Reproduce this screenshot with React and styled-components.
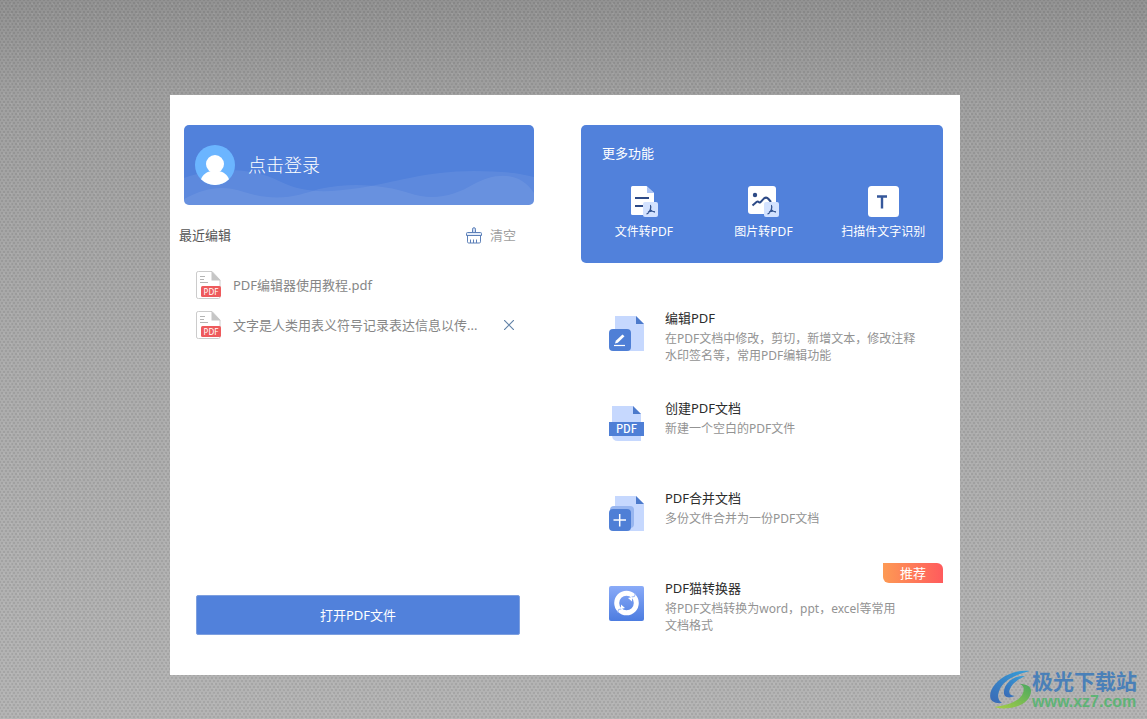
import React, { useState } from "react";
import styled, { createGlobalStyle } from "styled-components";

const blue = "#5181db";
const sans = '"Noto Sans", "Noto Sans CJK SC", sans-serif';

const GlobalStyle = createGlobalStyle`
  *, *::before, *::after { box-sizing: border-box; }
  body {
    margin: 0;
    font-family: ${sans};
    font-size: 13px;
    line-height: 18px;
    color: #333;
  }
  button { font: inherit; color: inherit; background: none; border: 0; padding: 0; cursor: pointer; }
  h1, h2, h3, p, ul { margin: 0; padding: 0; font: inherit; list-style: none; }
`;

const Desktop = styled.div`
  position: relative;
  min-height: 100vh;
  display: flex;
  flex-direction: column;
  padding: 95px 187px 44px 170px;
  background:
    radial-gradient(circle, rgba(0, 0, 0, .08) 0 1px, transparent 1px) 0 0 / 4px 6px,
    radial-gradient(circle, rgba(0, 0, 0, .08) 0 1px, transparent 1px) 2px 3px / 4px 6px,
    radial-gradient(circle, rgba(255, 255, 255, .07) 0 1px, transparent 1px) 1px 1px / 7px 5px,
    linear-gradient(#929292, #a0a0a0 14%, #ababab 50%, #b4b4b4);
`;

const Panel = styled.main`
  flex: 1;
  display: grid;
  grid-template-columns: 350fr 362fr;
  column-gap: 47px;
  padding: 30px 17px 40px 14px;
  background: #fff;
`;

const Column = styled.section`
  display: flex;
  flex-direction: column;
  min-width: 0;
`;

const LoginCard = styled.button`
  position: relative;
  display: flex;
  align-items: center;
  gap: 13px;
  height: 80px;
  padding: 0 11px;
  border-radius: 5px;
  overflow: hidden;
  background: ${blue};
  color: #fff;
  font-size: 18px;
  font-weight: 300;
  text-align: left;
`;

const Waves = styled.svg`
  position: absolute;
  inset: 0;
  width: 100%;
  height: 100%;
`;

const Avatar = styled.svg`
  position: relative;
  width: 40px;
  height: 40px;
`;

const LoginText = styled.span`
  position: relative;
`;

const RecentHeader = styled.div`
  display: flex;
  align-items: center;
  justify-content: space-between;
  height: 20px;
  margin: 20px 18px 0 -5px;
  color: #555;
`;

const ClearButton = styled.button`
  display: flex;
  align-items: center;
  gap: 8px;
  color: #a0a0a0;
`;

const FileList = styled.ul`
  flex: 1;
  margin: 20px 18px 0 12px;
`;

const FileRow = styled.li`
  display: flex;
  align-items: center;
  height: 40px;
  color: #868686;
`;

const FileName = styled.span`
  flex: 1;
  margin-left: 11px;
`;

const CloseButton = styled.button`
  display: flex;
  width: 14px;
  height: 14px;
  align-items: center;
  justify-content: center;
`;

const OpenButton = styled.button`
  height: 40px;
  margin: 0 14px 0 12px;
  border: 1px solid #7d9fdf;
  border-radius: 2px;
  background: ${blue};
  color: #fff;
`;

const ToolsCard = styled.section`
  height: 138px;
  padding: 19px 0 0;
  border-radius: 5px;
  background: ${blue};
  color: #fff;
`;

const ToolsTitle = styled.h2`
  padding-left: 21px;
`;

const ToolRow = styled.div`
  display: grid;
  grid-template-columns: repeat(3, 120fr);
  margin: 23px 0 0 3px;
`;

const Tool = styled.button`
  display: flex;
  flex-direction: column;
  align-items: center;
  gap: 6px;
  font-size: 12px;
`;

const FeatureList = styled.ul`
  display: flex;
  flex-direction: column;
  margin-top: 45px;
`;

const Feature = styled.li`
  position: relative;
  height: 90px;
  padding-left: 28px;
  &:last-child { height: auto; }
`;

const FeatureButton = styled.button`
  display: flex;
  align-items: flex-start;
  gap: 21px;
  text-align: left;
  svg { flex: none; margin-top: 8px; }
`;

const FeatureTitle = styled.h3`
  line-height: 20px;
  color: #2c2c2c;
`;

const FeatureText = styled.p`
  margin-top: 2px;
  font-size: 12px;
  line-height: 17px;
  color: #939393;
`;

const Ribbon = styled.span`
  position: absolute;
  top: -15px;
  right: 0;
  width: 60px;
  border-radius: 0 6px 0 6px;
  background: linear-gradient(90deg, #fd9a54, #ff5b5d);
  color: #fff;
  line-height: 20px;
  text-align: center;
`;

const Watermark = styled.aside`
  position: absolute;
  right: 10px;
  bottom: 7px;
  display: flex;
  align-items: center;
`;

const WatermarkName = styled.div`
  font-size: 21px;
  line-height: 22px;
  font-weight: 700;
  color: #4a80b8;
`;

const WatermarkSite = styled.div`
  font-family: "Liberation Sans", sans-serif;
  font-size: 16px;
  line-height: 20px;
  font-weight: 700;
  color: #5fb376;
`;

function Broom() {
  return (
    <svg width="16" height="17" viewBox="0 0 16 17" fill="none" stroke="#5d80b8" aria-hidden="true">
      <path d="M6.500 5.500V2.200a1.500 1.500 0 0 1 3 0V5.500" fill="#cfdcf3" />
      <path d="M1.500 5.500h13a1 1 0 0 1 1 1v2H.5v-2a1 1 0 0 1 1-1z" fill="#e3ecfa" />
      <path d="M1.500 8.500v6.300q0 1.200 1.200 1.200h10.600q1.200 0 1.200-1.200V8.500M4.500 16v-3.500M7.500 16v-3.500M10.500 16v-3.500" />
    </svg>
  );
}

function PdfFile() {
  return (
    <svg width="26" height="30" viewBox="0 0 26 30" aria-hidden="true">
      <path d="M2.500 1.500H16L24 10v17q0 1.500-1.500 1.500h-20Q.5 28.500.5 27V3q0-1.500 2-1.500z" fill="#fff" stroke="#ccc" />
      <path d="M15.500 1L24.500 10.500H15.500z" fill="#c6c6c6" />
      <path d="M4 6.500h5M4 9.500h4M4 12.500h8" stroke="#b5b5b5" />
      <rect x="5" y="16" width="20" height="11" rx="1.500" fill="#ee5a5c" />
      <text x="15" y="24.500" fontSize="8" textAnchor="middle" fill="#fff" fontFamily="Noto Sans, sans-serif">PDF</text>
    </svg>
  );
}

function PdfMark() {
  return (
    <>
      <rect x="13" y="17" width="15" height="15" rx="2" fill="#d3e2ff" />
      <path d="M20 20.500c1.200 0 .8 3.500-.3 5.300-1 1.700-2.200 3-3.200 3M20.200 24.500c.8 1.300 2.500 2.200 4.800 2.500M18 26.800l4.500-1" fill="none" stroke="#33538f" strokeWidth="1.300" />
    </>
  );
}

function FileToPdf() {
  return (
    <svg width="28" height="32" viewBox="0 0 28 32" aria-hidden="true">
      <path d="M2.500 1H16.500L24 8v22H2.500Q1 30 1 28.500v-26Q1 1 2.500 1z" fill="#fff" />
      <path d="M17 1.500V8h6.800z" fill="#a9c3f5" />
      <path d="M5 13h14M5 21h9" stroke="#2d4a86" strokeWidth="2" />
      <PdfMark />
    </svg>
  );
}

function ImageToPdf() {
  return (
    <svg width="31" height="32" viewBox="0 0 31 32" aria-hidden="true">
      <rect y="1" width="28" height="28" rx="3" fill="#fff" />
      <circle cx="7" cy="10" r="2.200" fill="#2d4a86" />
      <path d="M4.500 20.500L8.500 17q1.200-1 2.500.3 1 .8 2-.6l3-3.300q2.500-1.800 4.500.6l2.500 3" fill="none" stroke="#2d4a86" strokeWidth="2" />
      <g transform="translate(3 0)"><PdfMark /></g>
    </svg>
  );
}

function ScanText() {
  return (
    <svg width="31" height="32" viewBox="0 0 31 32" aria-hidden="true">
      <rect y="1" width="31" height="31" rx="3.500" fill="#fff" />
      <path d="M9 11.500h10M14 11.500V23.500" fill="none" stroke="#36589b" strokeWidth="2.400" />
    </svg>
  );
}

function EditIcon() {
  return (
    <svg width="35" height="35" viewBox="0 0 35 35" aria-hidden="true">
      <path d="M6 0h21l8 8v27H6z" fill="#c6d8fe" />
      <path d="M27 0l8 8h-8z" fill="#4c7acb" />
      <rect y="13" width="22" height="22" rx="4" fill="#4f7fd6" />
      <path d="M5 29.500h11" stroke="#fff" strokeWidth="1.200" />
      <path d="M6 27.500l.8-2.700 6.700-6.300 2 1.800-6.700 6.400z" fill="#fff" />
    </svg>
  );
}

function CreateIcon() {
  return (
    <svg width="35" height="35" viewBox="0 0 35 35" aria-hidden="true">
      <path d="M3 0h21l8 8v27H9q-6 0-6-6z" fill="#c6d8fe" />
      <path d="M24 0l8 8h-8z" fill="#4c7acb" />
      <rect y="16" width="35" height="14" fill="#4f7fd6" />
      <text x="17.500" y="27" fontSize="11" fontWeight="500" textAnchor="middle" fill="#fff" fontFamily="Noto Sans CJK SC, sans-serif">PDF</text>
    </svg>
  );
}

function MergeIcon() {
  return (
    <svg width="35" height="35" viewBox="0 0 35 35" aria-hidden="true">
      <path d="M6 0h21l8 8v27H6z" fill="#c6d8fe" />
      <path d="M27 0l8 8h-8z" fill="#4c7acb" />
      <rect x="1" y="10" width="24" height="22" rx="4" fill="#98b6f0" />
      <rect y="13" width="22" height="22" rx="4" fill="#4f7fd6" />
      <path d="M4.500 24h12.500M10.700 18v12.500" stroke="#fff" strokeWidth="1.500" />
    </svg>
  );
}

function ConverterIcon() {
  return (
    <svg width="35" height="35" viewBox="0 0 35 35" aria-hidden="true">
      <defs>
        <linearGradient id="conv" x2="0" y2="1">
          <stop stopColor="#8aabf8" />
          <stop offset="1" stopColor="#4c7ce0" />
        </linearGradient>
      </defs>
      <rect width="35" height="35" rx="2" fill="url(#conv)" />
      <circle cx="17.500" cy="17" r="9.800" fill="none" stroke="#fff" strokeWidth="5" />
      <path d="M22.500 11l3-.5.800-3M12.500 23l-3 .5-.8 3" fill="none" stroke="#9bb7f5" />
      <path d="M23 15.500v-4.500l-4 1zM12 18.500v4.500l4-1z" fill="#fff" />
    </svg>
  );
}

function Logo() {
  return (
    <svg width="42" height="42" viewBox="0 0 42 42" aria-hidden="true">
      <defs>
        <linearGradient id="swirlBlue" x1="1" x2="0" y2="1">
          <stop stopColor="#35a0da" />
          <stop offset="1" stopColor="#3a69b5" />
        </linearGradient>
        <linearGradient id="swirlGreen" x1="1" x2="0" y2="1">
          <stop stopColor="#4aa860" />
          <stop offset="1" stopColor="#a9cf45" />
        </linearGradient>
      </defs>
      <path d="M40 1C24-1 6 8 1 21c-3 9 2 13 11 12C7 30 7 24 11 17 16 9 27 4 40 1z" fill="url(#swirlBlue)" />
      <path d="M35 6c-11-1-20 7-21 15-1 6 4 8 11 5-5 0-7-3-5-7 2-6 9-10 15-13z" fill="url(#swirlBlue)" />
      <path d="M30 14c6 0 11 2 11 7 0 9-10 16-22 17-6 1-11 0-15-1 11-1 24-5 28-12 3-5 2-9-2-11z" fill="url(#swirlGreen)" />
    </svg>
  );
}

const features = [
  { title: "编辑PDF", lines: ["在PDF文档中修改，剪切，新增文本，修改注释", "水印签名等，常用PDF编辑功能"], Icon: EditIcon },
  { title: "创建PDF文档", lines: ["新建一个空白的PDF文件"], Icon: CreateIcon },
  { title: "PDF合并文档", lines: ["多份文件合并为一份PDF文档"], Icon: MergeIcon },
  { title: "PDF猫转换器", lines: ["将PDF文档转换为word，ppt，excel等常用", "文档格式"], Icon: ConverterIcon, badge: "推荐" },
];

const tools = [
  { label: "文件转PDF", Icon: FileToPdf },
  { label: "图片转PDF", Icon: ImageToPdf },
  { label: "扫描件文字识别", Icon: ScanText },
];

const recentFiles = [
  { name: "PDF编辑器使用教程.pdf" },
  { name: "文字是人类用表义符号记录表达信息以传...", removable: true },
];

export default function App() {
  const [files, setFiles] = useState(recentFiles);
  return (
    <>
      <GlobalStyle />
      <Desktop>
        <Panel>
          <Column>
            <LoginCard type="button">
              <Waves viewBox="0 0 350 80" preserveAspectRatio="none" aria-hidden="true">
                <g fill="#fff" fillOpacity=".07">
                  <path d="M0 53C35 40 70 44 95 56s45 12 80 7 65-17 115-17q40 0 60 6v28H0z" />
                  <path d="M0 74C22 62 40 60 60 67c35 11 55 3 75-3 35-8 70-3 90 4 24 8 45 3 65-9 20-11 45-14 60 9v12H0z" />
                </g>
              </Waves>
              <Avatar viewBox="0 0 40 40" aria-hidden="true">
                <circle cx="20" cy="20" r="20" fill="#6bb5ff" />
                <circle cx="20" cy="19" r="9" fill="#fff" />
                <path d="M6 34.300C8 29.500 11.500 27 16 26h8c4.500 1 8 3.500 10 8.300a20 20 0 0 1-28 0z" fill="#fff" />
              </Avatar>
              <LoginText>点击登录</LoginText>
            </LoginCard>
            <RecentHeader>
              <h2>最近编辑</h2>
              <ClearButton type="button" onClick={() => setFiles([])}>
                <Broom />
                清空
              </ClearButton>
            </RecentHeader>
            <FileList>
              {files.map((file) => (
                <FileRow key={file.name}>
                  <PdfFile />
                  <FileName>{file.name}</FileName>
                  {file.removable && (
                    <CloseButton
                      type="button"
                      aria-label="删除"
                      onClick={() => setFiles(files.filter((f) => f !== file))}
                    >
                      <svg width="10" height="10" viewBox="0 0 10 10" stroke="#6283a8" strokeWidth="1.200" aria-hidden="true">
                        <path d="M0 0l10 10M10 0L0 10" />
                      </svg>
                    </CloseButton>
                  )}
                </FileRow>
              ))}
            </FileList>
            <OpenButton type="button">打开PDF文件</OpenButton>
          </Column>
          <Column>
            <ToolsCard>
              <ToolsTitle>更多功能</ToolsTitle>
              <ToolRow>
                {tools.map(({ label, Icon }) => (
                  <Tool type="button" key={label}>
                    <Icon />
                    {label}
                  </Tool>
                ))}
              </ToolRow>
            </ToolsCard>
            <FeatureList>
              {features.map(({ title, lines, Icon, badge }) => (
                <Feature key={title}>
                  <FeatureButton type="button">
                    <Icon />
                    <div>
                      <FeatureTitle>{title}</FeatureTitle>
                      <FeatureText>
                        {lines.map((line, i) => (
                          <React.Fragment key={line}>
                            {i > 0 && <br />}
                            {line}
                          </React.Fragment>
                        ))}
                      </FeatureText>
                    </div>
                  </FeatureButton>
                  {badge && <Ribbon>{badge}</Ribbon>}
                </Feature>
              ))}
            </FeatureList>
          </Column>
        </Panel>
        <Watermark>
          <Logo />
          <div>
            <WatermarkName>极光下载站</WatermarkName>
            <WatermarkSite>www.xz7.com</WatermarkSite>
          </div>
        </Watermark>
      </Desktop>
    </>
  );
}
